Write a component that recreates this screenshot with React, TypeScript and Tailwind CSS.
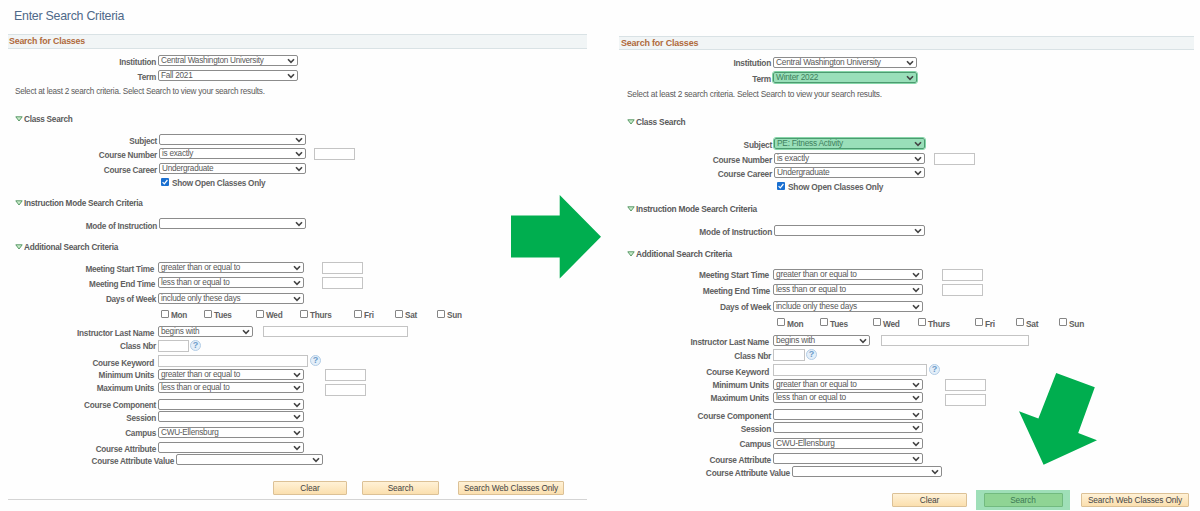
import type { ReactNode } from "react";

function Chevron() {
  return (
    <svg viewBox="0 0 8 6" className="h-[6px] w-[8px] shrink-0" fill="none" stroke="#444" strokeWidth="1.6">
      <path d="M1 1.2 4 4.3 7 1.2" />
    </svg>
  );
}

function Select({ className, value = "", selected = false }: { className: string; value?: string; selected?: boolean }) {
  return (
    <div
      role="combobox"
      aria-expanded="false"
      className={`flex h-[11px] shrink-0 items-center justify-between rounded-[2px] border pr-[2px] pl-[2px] ${
        selected ? "border-[#4c9a70] bg-[#99dfb9] text-[#3f7f5d] outline-1 outline-[#86d6a8]" : "border-[#8c8c8c] bg-white text-[#595959]"
      } ${className}`}
    >
      <span className="leading-[9px]">{value}</span>
      <Chevron />
    </div>
  );
}

function Input({ className }: { className: string }) {
  return <input type="text" className={`shrink-0 border border-[#c4c4c4] bg-white outline-none ${className}`} />;
}

function Row({ className, label = "", labelClass = "", children }: { className: string; label?: string; labelClass?: string; children: ReactNode }) {
  return (
    <div className={`flex shrink-0 items-start ${className}`}>
      <div className={`shrink-0 text-right font-bold leading-[11px] text-[#616161] ${labelClass}`}>{label}</div>
      {children}
    </div>
  );
}

function Heading({ className, children }: { className: string; children: ReactNode }) {
  return (
    <div className={`flex shrink-0 items-start gap-px font-bold leading-[11px] text-[#5a5a5a] ${className}`}>
      <svg viewBox="0 0 8 6" className="mt-[2px] h-[6px] w-[8px]" fill="#c9ecca" stroke="#5a9a68" strokeWidth="1">
        <path d="M0.8 0.8H7.2L4 5Z" />
      </svg>
      <span>{children}</span>
    </div>
  );
}

function Help({ className }: { className: string }) {
  return (
    <span className={`flex h-[11px] w-[11px] shrink-0 items-center justify-center rounded-full border border-[#b3cde6] bg-[#e4eff9] text-[9px] font-bold leading-none tracking-normal text-[#6f9cc9] ${className}`}>
      ?
    </span>
  );
}

function Day({ className, children }: { className: string; children: ReactNode }) {
  return (
    <label className={`flex shrink-0 items-start gap-[2px] font-bold leading-[10px] text-[#616161] ${className}`}>
      <input type="checkbox" className="h-[8px] w-[8px] appearance-none rounded-[1px] border border-[#858585] bg-white" />
      <span className="mt-px">{children}</span>
    </label>
  );
}

function OpenOnly({ className }: { className: string }) {
  return (
    <div className={`flex items-start font-bold leading-[11px] text-[#616161] ${className}`}>
      <svg viewBox="0 0 8 8" className="h-[8px] w-[8px]">
        <rect width="8" height="8" rx="1" fill="#1a6fd0" />
        <path d="M1.6 4.1 3.3 5.8 6.4 2" fill="none" stroke="#fff" strokeWidth="1.2" />
      </svg>
      <span className="ml-[3px]">Show Open Classes Only</span>
    </div>
  );
}

function Button({ className, children }: { className: string; children: ReactNode }) {
  return (
    <button className={`flex h-[14px] shrink-0 items-center justify-center rounded-[1px] border text-[8.3px] leading-none tracking-[-0.11px] ${className}`}>
      {children}
    </button>
  );
}

const cream = "border-[#dcc196] bg-linear-to-b from-[#fff1d6] to-[#fbdfae] text-[#444]";

function Before() {
  return (
    <section className="flex h-[511px] w-[579px] shrink-0 flex-col text-[8.2px] tracking-[-0.25px]">
      <h1 className="h-[34px] shrink-0 pt-[9px] pl-[6px] text-[12.4px] leading-[15px] tracking-[-0.26px] text-[#4f6989]">Enter Search Criteria</h1>
      <h2 className="h-[15px] shrink-0 border-y border-[#d9e2e5] bg-[#f1f5f6] pl-px text-[8.8px] font-bold leading-[13px] tracking-[-0.18px] text-[#b06a3c]">Search for Classes</h2>
      <Row className="mt-[6px] h-[15px]" label="Institution" labelClass="mt-[2px] w-[150px] pr-[2px]">
        <Select className="w-[140px]" value="Central Washington University" />
      </Row>
      <Row className="h-[16px]" label="Term" labelClass="mt-[2px] w-[150px] pr-[2px]">
        <Select className="w-[140px]" value="Fall 2021" />
      </Row>
      <p className="h-[28px] shrink-0 pl-[7px] leading-[11px] text-[#5a5a5a]">Select at least 2 search criteria. Select Search to view your search results.</p>
      <Heading className="h-[20px] pl-[7px]">Class Search</Heading>
      <Row className="h-[14px]" label="Subject" labelClass="mt-[2px] w-[151px] pr-[2px]">
        <Select className="w-[147px]" />
      </Row>
      <Row className="h-[15px]" label="Course Number" labelClass="mt-[2px] w-[151px] pr-[2px]">
        <Select className="w-[147px]" value="is exactly" />
        <Input className="ml-[8px] h-[12px] w-[41px]" />
      </Row>
      <Row className="h-[15px]" label="Course Career" labelClass="mt-[2px] w-[151px] pr-[2px]">
        <Select className="w-[147px]" value="Undergraduate" />
      </Row>
      <OpenOnly className="h-[20px] pl-[153px]" />
      <Heading className="h-[20px] pl-[7px]">Instruction Mode Search Criteria</Heading>
      <Row className="h-[24px]" label="Mode of Instruction" labelClass="mt-[3px] w-[151px] pr-[2px]">
        <Select className="w-[147px]" />
      </Row>
      <Heading className="h-[20px] pl-[7px]">Additional Search Criteria</Heading>
      <Row className="h-[15px]" label="Meeting Start Time" labelClass="mt-[2px] w-[150px] pr-[4px]">
        <Select className="w-[146px]" value="greater than or equal to" />
        <Input className="ml-[18px] h-[12px] w-[41px]" />
      </Row>
      <Row className="h-[16px]" label="Meeting End Time" labelClass="mt-[2px] w-[150px] pr-[3px]">
        <Select className="w-[146px]" value="less than or equal to" />
        <Input className="ml-[18px] h-[12px] w-[41px]" />
      </Row>
      <Row className="h-[17px]" label="Days of Week" labelClass="mt-px w-[150px] pr-[2px]">
        <Select className="w-[146px]" value="include only these days" />
      </Row>
      <div className="flex h-[16px] shrink-0 pl-[153px]">
        <Day className="w-[43px]">Mon</Day>
        <Day className="w-[52px]">Tues</Day>
        <Day className="w-[44px]">Wed</Day>
        <Day className="w-[54px]">Thurs</Day>
        <Day className="w-[41px]">Fri</Day>
        <Day className="w-[42px]">Sat</Day>
        <Day className="w-[30px]">Sun</Day>
      </div>
      <Row className="h-[14px]" label="Instructor Last Name" labelClass="mt-[2px] w-[150px] pr-[4px]">
        <Select className="w-[95px]" value="begins with" />
        <Input className="ml-[10px] h-[11px] w-[145px]" />
      </Row>
      <Row className="h-[15px]" label="Class Nbr" labelClass="mt-px w-[150px] pr-[2px]">
        <Input className="h-[12px] w-[31px]" />
        <Help className="ml-px" />
      </Row>
      <Row className="h-[14px]" label="Course Keyword" labelClass="mt-[3px] w-[150px] pr-[4px]">
        <Input className="h-[12px] w-[150px]" />
        <Help className="ml-[2px]" />
      </Row>
      <Row className="h-[13px]" label="Minimum Units" labelClass="mt-px w-[150px] pr-[4px]">
        <Select className="w-[146px]" value="greater than or equal to" />
        <Input className="ml-[21px] h-[12px] w-[41px]" />
      </Row>
      <Row className="h-[17px]" label="Maximum Units" labelClass="mt-px w-[150px] pr-[4px]">
        <Select className="w-[146px]" value="less than or equal to" />
        <Input className="mt-[2px] ml-[21px] h-[12px] w-[41px]" />
      </Row>
      <Row className="h-[12px]" label="Course Component" labelClass="mt-px w-[150px] pr-[2px]">
        <Select className="w-[146px]" />
      </Row>
      <Row className="h-[16px]" label="Session" labelClass="mt-[2px] w-[150px] pr-[2px]">
        <Select className="w-[146px]" />
      </Row>
      <Row className="h-[15px]" label="Campus" labelClass="mt-px w-[150px] pr-[2px]">
        <Select className="w-[146px]" value="CWU-Ellensburg" />
      </Row>
      <Row className="h-[12px]" label="Course Attribute" labelClass="mt-[2px] w-[150px] pr-[2px]">
        <Select className="w-[146px]" />
      </Row>
      <Row className="h-[27px]" label="Course Attribute Value" labelClass="mt-[2px] w-[168px] pr-[2px]">
        <Select className="w-[147px]" />
      </Row>
      <div className="flex h-[19px] shrink-0 border-b border-[#d4d4d4] pl-[265px]">
        <Button className={`${cream} w-[74px]`}>Clear</Button>
        <Button className={`${cream} ml-[15px] w-[77px]`}>Search</Button>
        <Button className={`${cream} ml-[19px] w-[106px]`}>Search Web Classes Only</Button>
      </div>
    </section>
  );
}

function After() {
  return (
    <section className="ml-[32px] flex h-[511px] w-[575px] shrink-0 flex-col pt-[36px] text-[8.35px] tracking-[-0.25px]">
      <h2 className="h-[14px] shrink-0 border-y border-[#d9e2e5] bg-[#f1f5f6] pl-[2px] text-[8.95px] font-bold leading-[12px] tracking-[-0.18px] text-[#b06a3c]">Search for Classes</h2>
      <Row className="mt-[7px] h-[15px]" label="Institution" labelClass="mt-px w-[154px] pr-[2px]">
        <Select className="w-[144px]" value="Central Washington University" />
      </Row>
      <Row className="h-[17px]" label="Term" labelClass="mt-[2px] w-[154px] pr-[2px]">
        <Select className="w-[144px]" value="Winter 2022" selected />
      </Row>
      <p className="h-[28px] shrink-0 pl-[8px] leading-[11px] text-[#5a5a5a]">Select at least 2 search criteria. Select Search to view your search results.</p>
      <Heading className="h-[21px] pl-[8px]">Class Search</Heading>
      <Row className="h-[15px]" label="Subject" labelClass="mt-[2px] w-[155px] pr-[2px]">
        <Select className="w-[151px]" value="PE: Fitness Activity" selected />
      </Row>
      <Row className="h-[14px]" label="Course Number" labelClass="mt-[2px] w-[155px] pr-[2px]">
        <Select className="w-[151px]" value="is exactly" />
        <Input className="ml-[9px] h-[12px] w-[41px]" />
      </Row>
      <Row className="h-[15px]" label="Course Career" labelClass="mt-[2px] w-[155px] pr-[2px]">
        <Select className="w-[151px]" value="Undergraduate" />
      </Row>
      <OpenOnly className="h-[22px] pl-[158px]" />
      <Heading className="h-[21px] pl-[8px]">Instruction Mode Search Criteria</Heading>
      <Row className="h-[24px]" label="Mode of Instruction" labelClass="mt-[2px] w-[155px] pr-[2px]">
        <Select className="w-[151px]" />
      </Row>
      <Heading className="h-[20px] pl-[8px]">Additional Search Criteria</Heading>
      <Row className="h-[15px]" label="Meeting Start Time" labelClass="mt-px w-[154px] pr-[4px]">
        <Select className="w-[150px]" value="greater than or equal to" />
        <Input className="ml-[19px] h-[12px] w-[41px]" />
      </Row>
      <Row className="h-[17px]" label="Meeting End Time" labelClass="mt-[2px] w-[154px] pr-[3px]">
        <Select className="w-[150px]" value="less than or equal to" />
        <Input className="ml-[19px] h-[12px] w-[41px]" />
      </Row>
      <Row className="h-[17px]" label="Days of Week" labelClass="mt-px w-[154px] pr-[2px]">
        <Select className="w-[150px]" value="include only these days" />
      </Row>
      <div className="flex h-[17px] shrink-0 pl-[158px]">
        <Day className="w-[43px]">Mon</Day>
        <Day className="w-[53px]">Tues</Day>
        <Day className="w-[45px]">Wed</Day>
        <Day className="w-[57px]">Thurs</Day>
        <Day className="w-[41px]">Fri</Day>
        <Day className="w-[43px]">Sat</Day>
        <Day className="w-[30px]">Sun</Day>
      </div>
      <Row className="h-[14px]" label="Instructor Last Name" labelClass="mt-[2px] w-[154px] pr-[4px]">
        <Select className="w-[97px]" value="begins with" />
        <Input className="ml-[11px] h-[11px] w-[148px]" />
      </Row>
      <Row className="h-[15px]" label="Class Nbr" labelClass="mt-[2px] w-[154px] pr-[2px]">
        <Input className="h-[12px] w-[32px]" />
        <Help className="ml-px" />
      </Row>
      <Row className="h-[15px]" label="Course Keyword" labelClass="mt-[3px] w-[154px] pr-[4px]">
        <Input className="h-[12px] w-[154px]" />
        <Help className="ml-[2px]" />
      </Row>
      <Row className="h-[13px]" label="Minimum Units" labelClass="mt-px w-[154px] pr-[4px]">
        <Select className="w-[150px]" value="greater than or equal to" />
        <Input className="ml-[22px] h-[12px] w-[41px]" />
      </Row>
      <Row className="h-[17px]" label="Maximum Units" labelClass="mt-px w-[154px] pr-[4px]">
        <Select className="w-[150px]" value="less than or equal to" />
        <Input className="mt-[2px] ml-[22px] h-[12px] w-[41px]" />
      </Row>
      <Row className="h-[13px]" label="Course Component" labelClass="mt-[2px] w-[154px] pr-[2px]">
        <Select className="w-[150px]" />
      </Row>
      <Row className="h-[16px]" label="Session" labelClass="mt-[2px] w-[154px] pr-[2px]">
        <Select className="w-[150px]" />
      </Row>
      <Row className="h-[15px]" label="Campus" labelClass="mt-px w-[154px] pr-[2px]">
        <Select className="w-[150px]" value="CWU-Ellensburg" />
      </Row>
      <Row className="h-[13px]" label="Course Attribute" labelClass="mt-[2px] w-[154px] pr-[2px]">
        <Select className="w-[150px]" />
      </Row>
      <Row className="h-[24px]" label="Course Attribute Value" labelClass="mt-[2px] w-[173px] pr-[2px]">
        <Select className="w-[150px]" />
      </Row>
      <div className="flex h-[20px] shrink-0 items-center pl-[273px]">
        <Button className={`${cream} w-[75px]`}>Clear</Button>
        <div className="ml-[9px] flex h-[20px] w-[94px] shrink-0 items-center justify-center bg-[#9fdfb8]">
          <Button className="w-[79px] border-[#72ba7f] bg-[#8fd494] text-[#3d7a55]">Search</Button>
        </div>
        <Button className={`${cream} ml-[11px] w-[108px]`}>Search Web Classes Only</Button>
      </div>
    </section>
  );
}

export default function App() {
  return (
    <main className="relative flex h-[511px] w-[1200px] overflow-hidden bg-[#fefefe] pl-[8px] font-['Liberation_Sans',Arial,sans-serif]">
      <Before />
      <After />
      <svg viewBox="0 0 90 84" className="absolute top-[195px] left-[511px] h-[84px] w-[90px]" fill="#00ae4f">
        <path d="M0 20.5H48.7V0L90 41.7 48.7 83.5V62.5H0Z" />
      </svg>
      <svg viewBox="0 0 78 92" className="absolute top-[373px] left-[1019px] h-[92px] w-[78px]" fill="#00ae4f">
        <path d="M37.2 0 75.8 14.2 59.2 60 78 67.3 24.6 91.8 0 38.3 19.4 45.4Z" />
      </svg>
    </main>
  );
}
